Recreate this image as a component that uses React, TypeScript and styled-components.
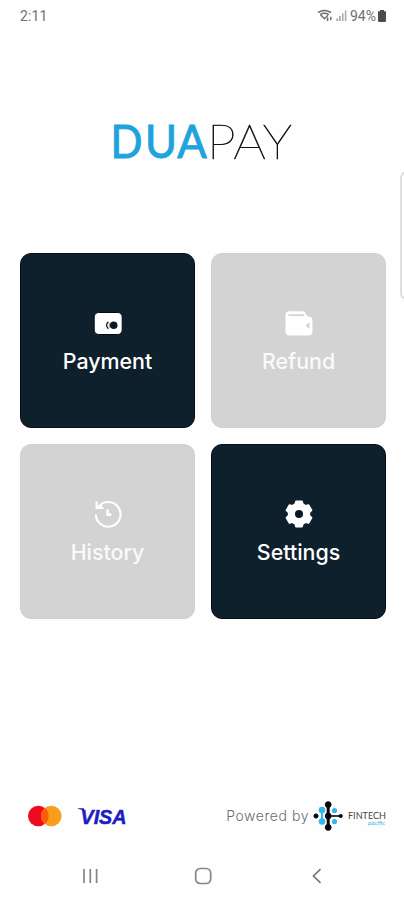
import React from "react";
import styled, { createGlobalStyle } from "styled-components";

const GlobalStyle = createGlobalStyle`
  * { box-sizing: border-box; }
  body { margin: 0; background: #fefefe; }
  svg { display: block; }
`;

const Screen = styled.div`
  position: relative;
  width: 404px;
  height: 900px;
  overflow: hidden;
  display: flex;
  flex-direction: column;
  background: #fefefe;
  font-family: Inter, "Liberation Sans", sans-serif;
`;

const StatusBar = styled.header`
  display: flex;
  justify-content: space-between;
  align-items: center;
  height: 32px;
  padding: 0 17px 0 20px;
  font: 400 14px/32px Roboto, sans-serif;
  color: #707070;
`;

const Clock = styled.span`
  letter-spacing: 0.1px;
`;

const StatusIcons = styled.div`
  display: flex;
  align-items: center;
`;

const BatteryLevel = styled.span`
  margin-right: 1px;
`;

const Brand = styled.h1`
  margin: 0;
  height: 221.4px;
  padding: 73px 0 0 108px;
`;

const TileGrid = styled.main`
  display: grid;
  grid-template-columns: repeat(2, 174.5px);
  grid-auto-rows: 174.5px;
  gap: 16.5px;
  padding-left: 20.3px;
`;

const Tile = styled.button<{ $enabled?: boolean }>`
  display: flex;
  flex-direction: column;
  align-items: center;
  padding: 53px 0 0;
  border: 1px solid ${(p) => (p.$enabled ? "#020d17" : "#d0d0d0")};
  border-radius: 11px;
  background: ${(p) => (p.$enabled ? "#0f202d" : "#d3d3d3")};
  color: ${(p) => (p.$enabled ? "#fff" : "#fafafa")};
  font-family: inherit;
`;

const TileLabel = styled.span`
  margin-top: 8px;
  font-size: 21.4px;
  font-weight: 500;
  line-height: 28px;
`;

const EdgeHandle = styled.div`
  position: absolute;
  left: 400px;
  top: 171px;
  width: 16px;
  height: 129px;
  border: 2px solid #dedede;
  border-radius: 7px;
`;

const Footer = styled.footer`
  display: flex;
  align-items: center;
  height: 40px;
  margin-top: 177px;
  padding: 0 16px 0 26px;
`;

const PaymentMarks = styled.div`
  display: flex;
  align-items: center;
  gap: 13px;
`;

const PoweredBy = styled.div`
  display: flex;
  align-items: center;
  margin-left: auto;
  gap: 3px;
  color: #6c6c6c;
  font: 300 14px/20px Inter, sans-serif;
  letter-spacing: 0.55px;
  white-space: nowrap;
`;

const NavBar = styled.nav`
  display: flex;
  align-items: center;
  justify-content: space-between;
  height: 40px;
  margin-top: 20px;
  padding: 0 79px 0 80px;
`;

const StatusGlyphs = () => (
  <svg width="33" height="16" viewBox="0 0 33 16" fill="none" stroke="#707070">
    <path d="M1 4.5Q7.5 0.5 14 4.5M3.2 6.5Q7.5 3.8 11.8 6.5M3.5 6.7L7.5 10.8L11 7.2" strokeWidth="1.5" />
    <path d="M10.6 9.5V13M13.8 8.7V12.2" strokeWidth="1.5" />
    <path d="M20.2 10.5V13M23 8V13" stroke="#999" strokeWidth="1.5" />
    <path d="M25.8 5.5V13M28.6 2.5V13" stroke="#aaa" strokeWidth="1.5" />
  </svg>
);

const BatteryIcon = () => (
  <svg width="10" height="14" viewBox="0 0 10 14">
    <path d="M3 1H7V2.3H9V11.8Q9 13 7.8 13H2.2Q1 13 1 11.8V2.3H3Z" fill="#4c4c4c" />
  </svg>
);

const BrandLogo = () => (
  <svg width="200" height="70" viewBox="0 0 200 70" fontFamily="Lato" fontSize="47">
    <g fontWeight="400" fill="#20a3dc" stroke="#20a3dc" strokeWidth="1">
      <text x="2.4" y="53.3" textLength="32" lengthAdjust="spacingAndGlyphs">D</text>
      <text x="37" y="53.3" textLength="32" lengthAdjust="spacingAndGlyphs">U</text>
      <text x="69.3" y="53.3" textLength="29.5" lengthAdjust="spacingAndGlyphs">A</text>
    </g>
    <text x="99" y="53.5" fontSize="47.5" fontWeight="100" fill="#111" stroke="#111" strokeWidth="0.6" textLength="85" lengthAdjust="spacingAndGlyphs">PAY</text>
  </svg>
);

const CardIcon = () => (
  <svg width="32" height="32" viewBox="0 0 32 32">
    <rect x="2.2" y="5.5" width="28" height="22" rx="4.5" fill="#fff" stroke="#020b13" />
    <circle cx="21.7" cy="18.3" r="3.8" fill="#0b1720" />
    <path d="M16.4 14.8Q12.7 18.3 16.4 21.8" fill="none" stroke="#0b1720" strokeWidth="1.3" />
    <path d="M17.8 16Q16.5 18.3 17.8 20.6" fill="none" stroke="#777" strokeWidth="0.8" />
  </svg>
);

const WalletIcon = () => (
  <svg width="32" height="32" viewBox="0 0 32 32">
    <path d="M6 4.2H19.6Q22.4 4.2 22.9 7.2L24.5 9.2Q29.4 9.5 29.4 13V24.5Q29.4 28.5 25.4 28.5H6.5Q2.5 28.5 2.5 24.5V7.7Q2.5 4.2 6 4.2Z" fill="#fff" />
    <path d="M6 8.1H20.5" stroke="#d3d3d3" strokeWidth="1.6" strokeLinecap="round" />
    <path d="M26 16.1L23 18.6L26 21.1Z" fill="#d3d3d3" stroke="#d3d3d3" strokeLinejoin="round" />
  </svg>
);

const HistoryIcon = () => (
  <svg width="32" height="32" viewBox="0 0 32 32" fill="none" stroke="#fff">
    <path d="M6.5 8.8A12.3 12.3 0 1 1 3.9 16.5" strokeWidth="2.1" />
    <path d="M4.6 3.5V10H11.5" strokeWidth="2.2" />
    <path d="M5 9.5L9.5 5.8V9.5Z" fill="#fff" />
    <path d="M15.6 11.5V16.6H19.3" strokeWidth="2.6" />
  </svg>
);

const GearIcon = () => (
  <svg width="32" height="32" viewBox="0 0 32 32">
    <g fill="#fff" stroke="#fff" strokeWidth="2" strokeLinejoin="round">
      <circle cx="16" cy="16" r="10.2" />
      <path d="M13.1 3.4H18.9L20 8H12Z" />
      <path d="M13.1 3.4H18.9L20 8H12Z" transform="rotate(60 16 16)" />
      <path d="M13.1 3.4H18.9L20 8H12Z" transform="rotate(120 16 16)" />
      <path d="M13.1 3.4H18.9L20 8H12Z" transform="rotate(180 16 16)" />
      <path d="M13.1 3.4H18.9L20 8H12Z" transform="rotate(240 16 16)" />
      <path d="M13.1 3.4H18.9L20 8H12Z" transform="rotate(300 16 16)" />
    </g>
    <circle cx="16" cy="16" r="4" fill="#0a1823" />
  </svg>
);

const MastercardLogo = () => (
  <svg width="38" height="24" viewBox="0 0 38 24">
    <circle cx="12.3" cy="12" r="10.3" fill="#ec0b20" />
    <circle cx="25.3" cy="12" r="10.3" fill="#f99d1c" />
    <path d="M18.8 4A10.3 10.3 0 0 1 18.8 20A10.3 10.3 0 0 1 18.8 4Z" fill="#fb5b0c" />
  </svg>
);

const VisaLogo = () => (
  <svg width="56" height="34" viewBox="0 0 56 34">
    <path d="M0.8 9.3H6.8L8 14Q5.4 10.3 0.8 9.8Z" fill="#1c1cc4" />
    <text x="3.5" y="24.6" fontFamily="Liberation Sans" fontWeight="700" fontStyle="italic" fontSize="21" fill="#1c1cc4" stroke="#1c1cc4" strokeWidth="0.5" textLength="46" lengthAdjust="spacingAndGlyphs">VISA</text>
  </svg>
);

const FintechLogo = () => (
  <svg width="76" height="34" viewBox="0 0 76 34" letterSpacing="0">
    <g stroke="#35b5ef" fill="#35b5ef" strokeWidth="2.2">
      <path d="M10 11.5V22.5" />
      <circle cx="10" cy="11" r="2.2" />
      <circle cx="10" cy="22.5" r="2.2" />
      <circle cx="22.5" cy="11.5" r="1.5" />
      <circle cx="22.5" cy="22.5" r="1.5" />
    </g>
    <g fill="#05070a" stroke="#05070a">
      <path d="M16.2 5V29" strokeWidth="3" />
      <path d="M16 17H28" strokeWidth="1.6" />
      <circle cx="16.2" cy="5.6" r="2.9" />
      <circle cx="16.2" cy="17" r="2.9" />
      <circle cx="16.2" cy="28.4" r="2.9" />
      <circle cx="4" cy="17" r="2.1" />
      <circle cx="28.7" cy="17" r="1.6" />
    </g>
    <text x="36" y="20" fontFamily="Lato" fontWeight="400" fontSize="9.5" fill="#444" textLength="38" lengthAdjust="spacingAndGlyphs">FINTECH</text>
    <text x="56" y="26.3" fontFamily="Lato" fontWeight="400" fontStyle="italic" fontSize="6" fill="#35b9ee" textLength="17" lengthAdjust="spacingAndGlyphs">pacific</text>
  </svg>
);

const RecentsIcon = () => (
  <svg width="20" height="18" viewBox="0 0 20 18" stroke="#858585" strokeWidth="1.7">
    <path d="M4 2V16M10.3 2V16M16.6 2V16" />
  </svg>
);

const HomeIcon = () => (
  <svg width="20" height="20" viewBox="0 0 20 20">
    <rect x="2.7" y="2.5" width="15" height="15" rx="4.5" fill="none" stroke="#858585" strokeWidth="1.7" />
  </svg>
);

const BackIcon = () => (
  <svg width="20" height="20" viewBox="0 0 20 20">
    <path d="M15.5 3.2L8.5 10L15.5 16.8" fill="none" stroke="#777" strokeWidth="1.7" />
  </svg>
);

const actions = [
  { label: "Payment", icon: <CardIcon />, enabled: true },
  { label: "Refund", icon: <WalletIcon />, enabled: false },
  { label: "History", icon: <HistoryIcon />, enabled: false },
  { label: "Settings", icon: <GearIcon />, enabled: true },
];

export default function App() {
  return (
    <>
      <GlobalStyle />
      <Screen>
        <StatusBar>
          <Clock>2:11</Clock>
          <StatusIcons>
            <StatusGlyphs />
            <BatteryLevel>94%</BatteryLevel>
            <BatteryIcon />
          </StatusIcons>
        </StatusBar>
        <Brand>
          <BrandLogo />
        </Brand>
        <TileGrid>
          {actions.map((action) => (
            <Tile key={action.label} $enabled={action.enabled}>
              {action.icon}
              <TileLabel>{action.label}</TileLabel>
            </Tile>
          ))}
        </TileGrid>
        <Footer>
          <PaymentMarks>
            <MastercardLogo />
            <VisaLogo />
          </PaymentMarks>
          <PoweredBy>
            Powered by
            <FintechLogo />
          </PoweredBy>
        </Footer>
        <NavBar>
          <RecentsIcon />
          <HomeIcon />
          <BackIcon />
        </NavBar>
        <EdgeHandle />
      </Screen>
    </>
  );
}
